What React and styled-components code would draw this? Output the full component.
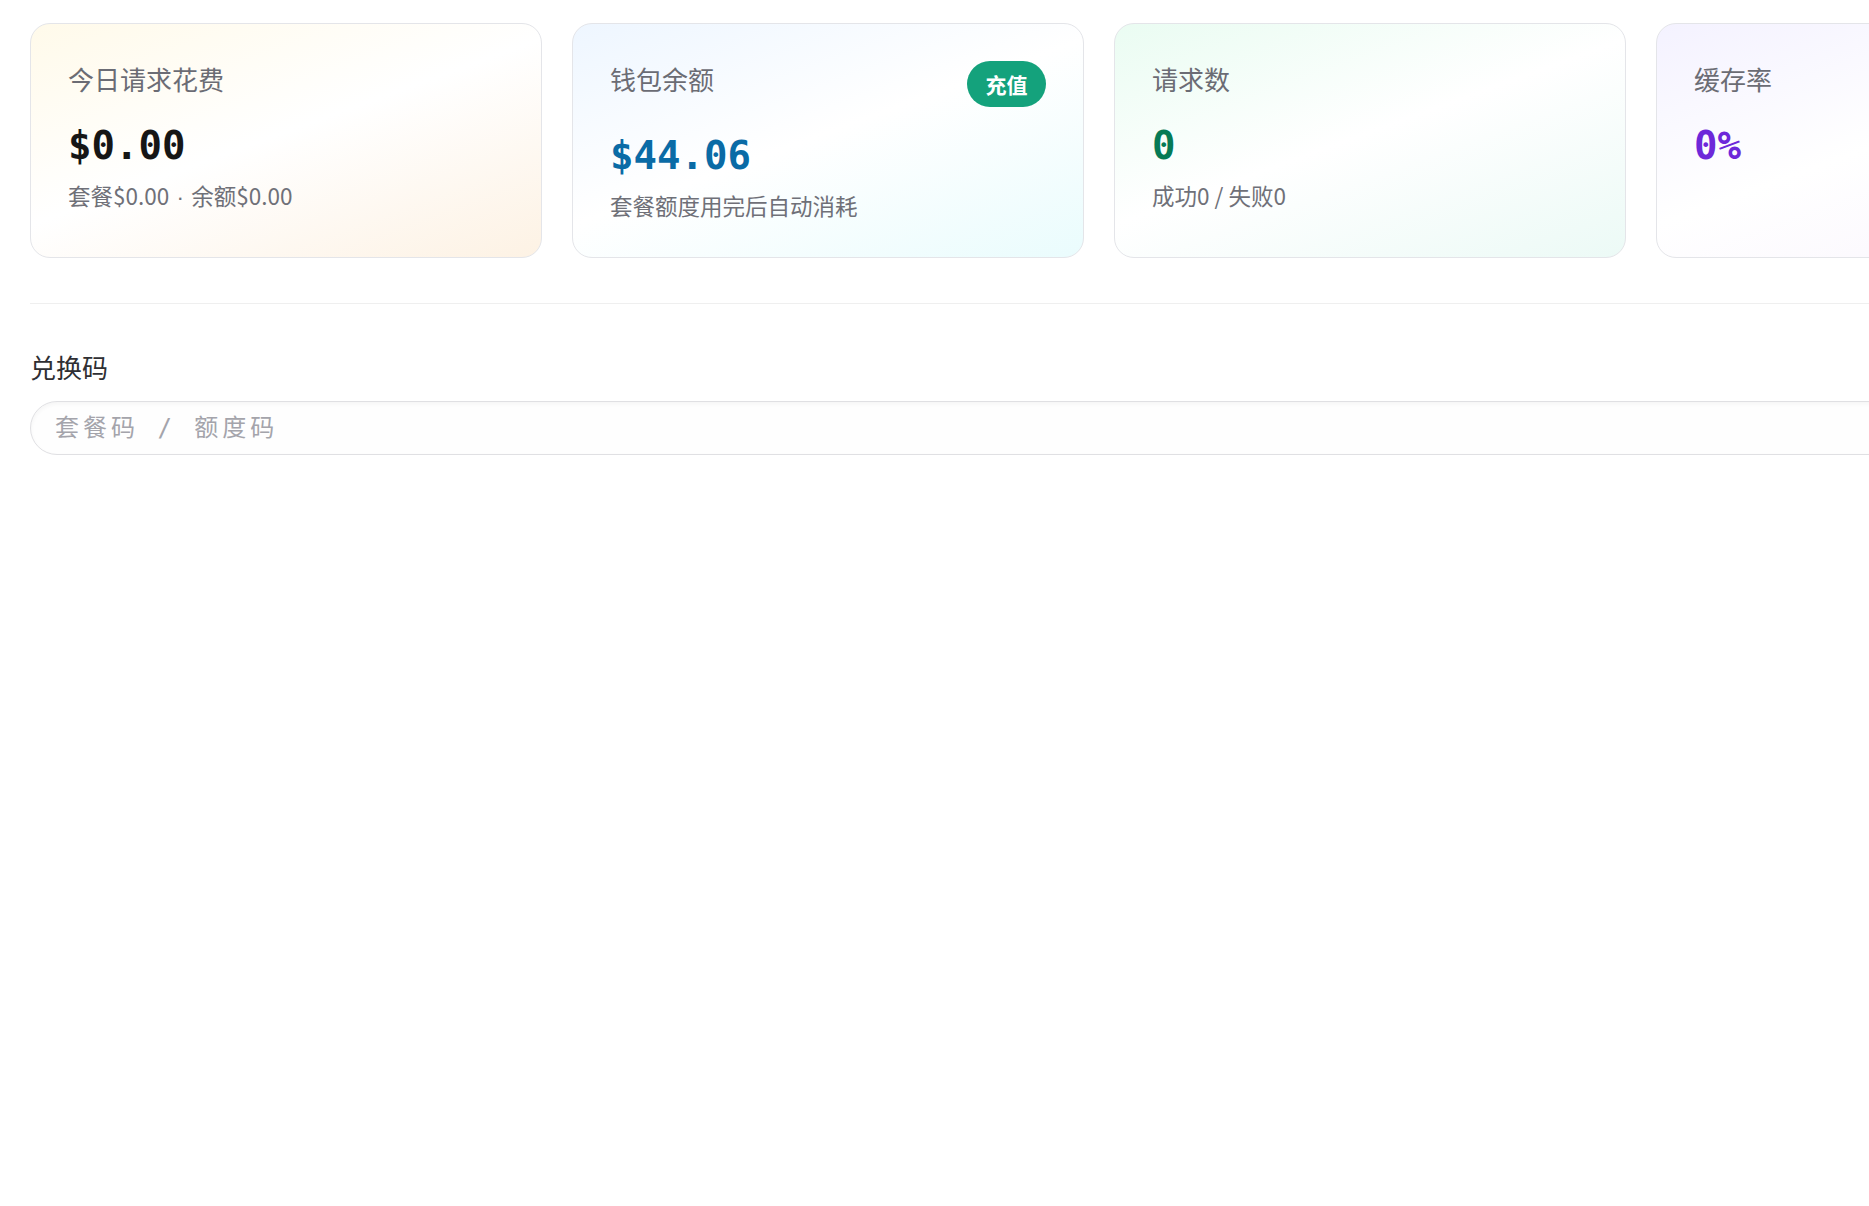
import React from "react";
import styled, { createGlobalStyle } from "styled-components";

const GlobalStyle = createGlobalStyle`
  html, body {
    margin: 0;
    padding: 0;
    background: #ffffff;
    overflow: hidden;
  }
  body {
    font-family: "Noto Sans CJK SC", "Noto Sans", sans-serif;
    color: #333;
  }
  * { box-sizing: border-box; }
`;

const Page = styled.main`
  width: 2198px;
  padding: 23px 30px 40px;
`;

const StatGrid = styled.section`
  display: grid;
  grid-template-columns: repeat(4, 1fr);
  gap: 30px;
`;

const tones = {
  amber: { from: "#fffaea", to: "#fdf2e4", value: "#161616" },
  sky: { from: "#eef6ff", to: "#eafcfd", value: "#0a6ba6" },
  mint: { from: "#eafcf2", to: "#ecfaf6", value: "#067a56" },
  violet: { from: "#f4f2ff", to: "#f9f4fd", value: "#6d28d9" },
};

const Card = styled.article`
  height: 235px;
  border: 1px solid #e4e5e9;
  border-radius: 20px;
  padding: 37px 37px 0 37px;
  background: linear-gradient(
    160deg,
    ${(p) => tones[p.$tone].from} 0%,
    #ffffff 48%,
    ${(p) => tones[p.$tone].to} 100%
  );
  display: flex;
  flex-direction: column;
`;

const CardHead = styled.div`
  display: flex;
  align-items: flex-start;
  justify-content: space-between;
`;

const CardTitle = styled.h3`
  margin: 0;
  font-size: 26px;
  line-height: 36px;
  font-weight: 400;
  color: #6b6c74;
`;

const TopUp = styled.button`
  height: 46px;
  min-width: 79px;
  padding: 0 16px;
  border: none;
  border-radius: 23px;
  background: #14a27c;
  color: #ffffff;
  font-family: "Noto Sans CJK SC", sans-serif;
  font-size: 21px;
  font-weight: 700;
  cursor: pointer;
`;

const Value = styled.div`
  margin-top: 25px;
  font-family: "DejaVu Sans Mono", "Liberation Mono", monospace;
  font-size: 39px;
  line-height: 48px;
  font-weight: 700;
  color: ${(p) => tones[p.$tone].value};
`;

const Note = styled.p`
  margin: 9px 0 0;
  font-size: 22.5px;
  line-height: 33px;
  color: #6f7078;
`;

const Dot = styled.span`
  font-family: "Liberation Sans", sans-serif;
  padding: 0 1px;
`;

const Divider = styled.hr`
  margin: 45px 0 0;
  border: none;
  border-top: 1px solid #efefef;
`;

const RedeemLabel = styled.label`
  display: block;
  margin-top: 45px;
  font-size: 26px;
  line-height: 36px;
  color: #2f2f33;
`;

const RedeemInput = styled.input`
  display: block;
  width: 100%;
  height: 54px;
  margin-top: 16px;
  padding: 0 24px;
  border: 1px solid #e0e0e3;
  border-radius: 27px;
  background: #fefefe;
  box-shadow: inset 0 2px 4px rgba(0, 0, 0, 0.04);
  font-family: "DejaVu Sans Mono", "Noto Sans CJK SC", monospace;
  font-size: 24px;
  letter-spacing: 4px;
  color: #333;
  outline: none;

  &::placeholder {
    color: #a4a4ab;
  }
`;

const stats = [
  { tone: "amber", title: "今日请求花费", value: "$0.00", note: ["套餐$0.00", "余额$0.00"] },
  { tone: "sky", title: "钱包余额", value: "$44.06", note: ["套餐额度用完后自动消耗"], action: "充值" },
  { tone: "mint", title: "请求数", value: "0", note: ["成功0 / 失败0"] },
  { tone: "violet", title: "缓存率", value: "0%" },
];

export default function App() {
  return (
    <>
      <GlobalStyle />
      <Page>
        <StatGrid>
          {stats.map((s) => (
            <Card key={s.title} $tone={s.tone}>
              <CardHead>
                <CardTitle>{s.title}</CardTitle>
                {s.action && <TopUp type="button">{s.action}</TopUp>}
              </CardHead>
              <Value $tone={s.tone}>{s.value}</Value>
              {s.note && (
                <Note>
                  {s.note.map((part, i) => (
                    <React.Fragment key={part}>
                      {i > 0 && <Dot> · </Dot>}
                      {part}
                    </React.Fragment>
                  ))}
                </Note>
              )}
            </Card>
          ))}
        </StatGrid>
        <Divider />
        <RedeemLabel htmlFor="redeem">兑换码</RedeemLabel>
        <RedeemInput id="redeem" placeholder="套餐码 / 额度码" />
      </Page>
    </>
  );
}
